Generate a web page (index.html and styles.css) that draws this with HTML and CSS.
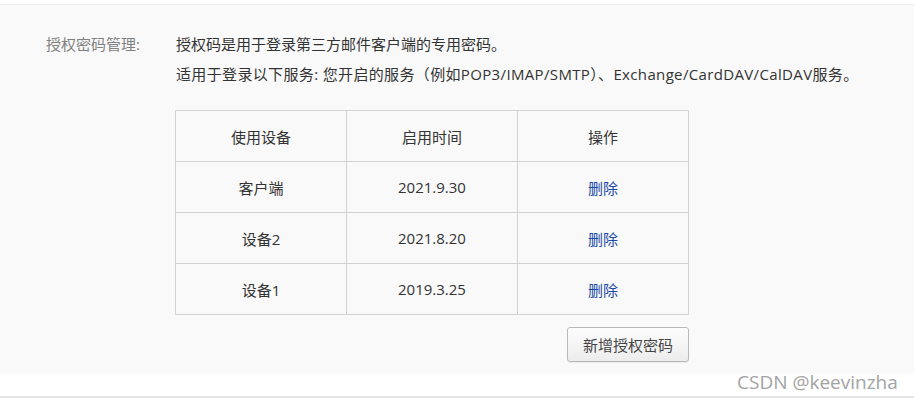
FILE: index.html
```html
<!DOCTYPE html>
<html lang="zh-CN">
<head>
    <meta charset="UTF-8">
    <title>授权密码管理</title>
    <link rel="stylesheet" href="styles.css">
</head>
<body>
    <div class="panel">
        <div class="setting-row">
            <div class="setting-label">授权密码管理:</div>
            <div class="setting-body">
                <p class="desc">授权码是用于登录第三方邮件客户端的专用密码。</p>
                <p class="desc wide">适用于登录以下服务: 您开启的服务（例如POP3/IMAP/SMTP）、Exchange/CardDAV/CalDAV服务。</p>

                <table class="device-table">
                    <thead>
                        <tr>
                            <th>使用设备</th>
                            <th>启用时间</th>
                            <th>操作</th>
                        </tr>
                    </thead>
                    <tbody>
                        <tr>
                            <td>客户端</td>
                            <td>2021.9.30</td>
                            <td><a href="#" class="del-link">删除</a></td>
                        </tr>
                        <tr>
                            <td>设备2</td>
                            <td>2021.8.20</td>
                            <td><a href="#" class="del-link">删除</a></td>
                        </tr>
                        <tr>
                            <td>设备1</td>
                            <td>2019.3.25</td>
                            <td><a href="#" class="del-link">删除</a></td>
                        </tr>
                    </tbody>
                </table>

                <div class="actions">
                    <button class="btn">新增授权密码</button>
                </div>
            </div>
        </div>
    </div>
    <div class="footer">
        <span class="watermark">CSDN @keevinzha</span>
    </div>
</body>
</html>
```

FILE: styles.css
```css
body {
    margin: 0;
    padding: 4px 0 0;
    background: #fff;
    font-family: "Open Sans", "Noto Sans CJK SC", sans-serif;
    font-size: 15px;
    color: #333;
}

.panel {
    border-top: 1px solid #ececec;
    background: #f9f9f9;
    height: 370px;
    box-sizing: border-box;
    padding-top: 28px;
}

.setting-row {
    display: flex;
}

.setting-label {
    width: 130px;
    padding-left: 46px;
    color: #808080;
    line-height: 22px;
}

.setting-body {
    width: 514px;
}

.desc {
    margin: 0 0 8px;
    line-height: 22px;
    white-space: nowrap;
}

.desc.wide {
    letter-spacing: 0.35px;
}

.device-table {
    margin-top: 25px;
    margin-left: -1px;
    border-collapse: collapse;
    width: 514px;
    table-layout: fixed;
}

.device-table th,
.device-table td {
    border: 1px solid #d2d2d2;
    height: 50px;
    padding: 0;
    text-align: center;
    font-weight: normal;
    color: #333;
}

.del-link {
    color: #1c4aa6;
    text-decoration: none;
}

.actions {
    display: flex;
    justify-content: flex-end;
    margin-top: 12px;
}

.btn {
    width: 122px;
    height: 35px;
    font-family: inherit;
    font-size: 15px;
    color: #444;
    border: 1px solid #b9b9b9;
    border-radius: 3px;
    background: linear-gradient(#fdfdfd, #ececec);
    box-shadow: 0 1px 1px rgba(0, 0, 0, 0.06);
    margin-right: 1px;
}

.footer {
    height: 22px;
    border-bottom: 2px solid #e6e6e6;
    position: relative;
}

.watermark {
    position: absolute;
    left: 737px;
    top: -7px;
    font-size: 19px;
    color: #a3a3a3;
    line-height: 30px;
}
```
